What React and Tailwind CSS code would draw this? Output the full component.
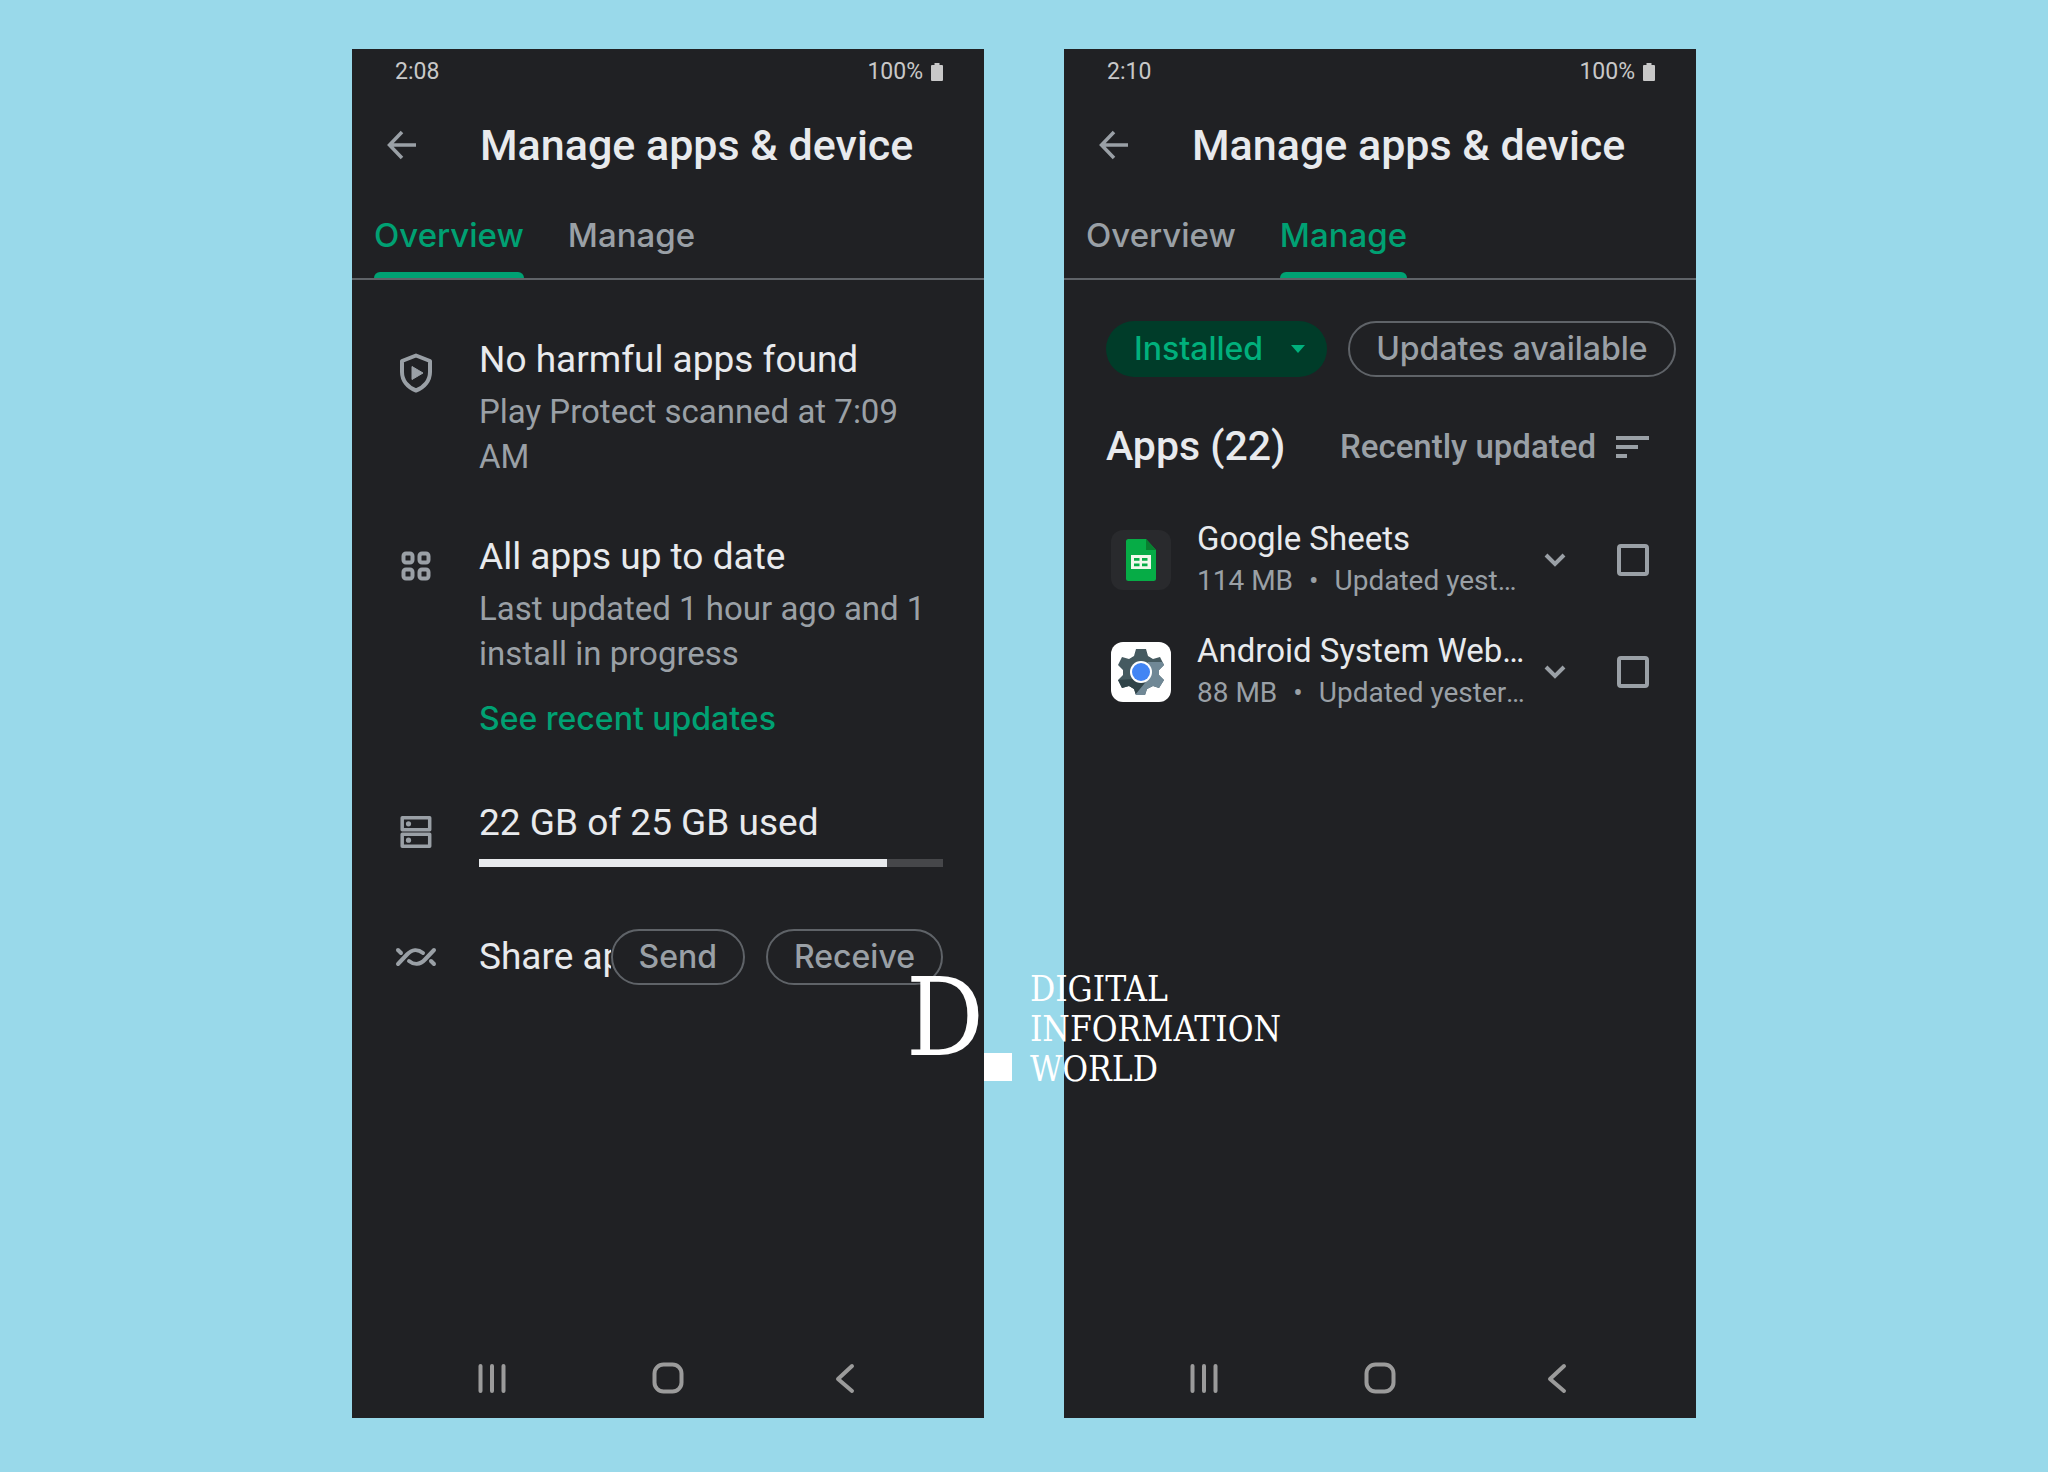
import { useState } from 'react';

const TABS = ['Overview', 'Manage'];

const APPS = [
  { id: 'sheets', name: 'Google Sheets', size: '114 MB', updated: 'Updated yesterday', Icon: SheetsIcon },
  { id: 'webview', name: 'Android System WebView', size: '88 MB', updated: 'Updated yesterday', Icon: WebViewIcon },
];

function ShieldIcon() {
  return (
    <svg className="h-10 w-8" viewBox="0 0 32 40" fill="none" aria-hidden="true">
      <path d="M16 2.500 30 8v11c0 8.500-5.600 15.500-14 18.500C7.600 34.500 2 27.500 2 19V8z" stroke="#9aa0a6" strokeWidth="4" strokeLinejoin="round" />
      <path d="M12 13.500v13l11-6.500z" fill="#9aa0a6" stroke="#9aa0a6" strokeLinejoin="round" />
    </svg>
  );
}

function GridIcon() {
  return (
    <svg className="size-8" viewBox="0 0 32 32" fill="none" stroke="#9aa0a6" strokeWidth="4" aria-hidden="true">
      <rect x="3.500" y="3.500" width="9" height="9" rx="2.500" />
      <rect x="19.500" y="3.500" width="9" height="9" rx="2.500" />
      <rect x="3.500" y="19.500" width="9" height="9" rx="2.500" />
      <rect x="19.500" y="19.500" width="9" height="9" rx="2.500" />
    </svg>
  );
}

function StorageIcon() {
  return (
    <svg className="size-8" viewBox="0 0 32 32" fill="none" stroke="#9aa0a6" strokeWidth="3.500" strokeLinejoin="round" aria-hidden="true">
      <rect x="2.200" y="1.800" width="27.500" height="12" />
      <rect x="2.200" y="18.200" width="27.500" height="12" />
      <circle cx="8.500" cy="7.800" r="2.600" fill="#9aa0a6" stroke="none" />
      <circle cx="8.500" cy="24.200" r="2.600" fill="#9aa0a6" stroke="none" />
    </svg>
  );
}

function NearbyIcon() {
  return (
    <svg className="h-5 w-[42px]" viewBox="0 0 42 20" fill="none" stroke="#9aa0a6" strokeWidth="4" strokeLinecap="round" aria-hidden="true">
      <path d="M3 17 12 7.500C17 2 23 2 28 6" />
      <path d="M39 3 30 12.500C25 18 19 18 14 14" />
      <path d="M3 3l3 3" />
      <path d="M36 14l3 3" />
    </svg>
  );
}

function SheetsIcon() {
  return (
    <span className="flex size-[60px] shrink-0 items-center justify-center rounded-xl bg-[#292a2d]">
      <svg className="h-[42px] w-[30px]" viewBox="0 0 30 42" aria-hidden="true">
        <path d="M2.500 0H20l10 11v28.500a2.500 2.500 0 0 1-2.500 2.500h-25A2.500 2.500 0 0 1 0 39.500v-37A2.500 2.500 0 0 1 2.500 0z" fill="#06ac46" />
        <path d="M20 0l10 11H20z" fill="#087f2f" />
        <path d="M5 16h20v14H5z" fill="#f1f8ec" />
        <path d="M8 19h5.500v2.800H8zM16 19h5.500v2.800H16zM8 24.500h5.500v2.800H8zM16 24.500h5.500v2.800H16z" fill="#06ac46" />
      </svg>
    </span>
  );
}

function WebViewIcon() {
  return (
    <span className="flex size-[60px] shrink-0 items-center justify-center rounded-xl bg-white">
      <svg className="size-[46px]" viewBox="0 0 46 46" aria-hidden="true">
        <defs>
          <clipPath id="gear">
            <path d="M18 0h10l2 7 5 3 7-2 4 8-5 5v5l5 5-5 8-6-2-6 3-2 6H18l-2-6-5-3-7 2-4-8 5-5v-5l-5-5 4-8 7 2 5-3z" />
          </clipPath>
        </defs>
        <g clipPath="url(#gear)">
          <path d="M0 0h46v46H0z" fill="#455a60" />
          <path d="M46 13H30l-8 18-6 15h30z" fill="#708896" />
          <path d="M31 29 17 46H0V31z" fill="#304348" />
        </g>
        <circle cx="23" cy="23" r="11" fill="#fff" />
        <circle cx="23" cy="23" r="9" fill="#4285f4" />
      </svg>
    </span>
  );
}

function StatusBar({ time }) {
  return (
    <div className="flex h-[46px] items-center justify-between pr-[41px] pl-[43px] text-[23px] text-[#c8c8c8]">
      <span>{time}</span>
      <span className="flex items-center gap-2">
        100%
        <svg className="h-[18px] w-3" viewBox="0 0 12 18" fill="#c8c8c8" aria-hidden="true">
          <path d="M3.500 0h5v2H11a1 1 0 0 1 1 1v14a1 1 0 0 1-1 1H1a1 1 0 0 1-1-1V3a1 1 0 0 1 1-1h2.500z" />
        </svg>
      </span>
    </div>
  );
}

function Header({ time, tab }) {
  return (
    <header>
      <StatusBar time={time} />
      <div className="flex h-[100px] items-center pl-8">
        <button aria-label="Back" className="flex w-24 items-center">
          <svg className="size-9" viewBox="0 0 36 36" fill="none" stroke="#9aa0a6" strokeWidth="3.500" aria-hidden="true">
            <path d="M32 18H6M18 5 5.500 18 18 31" />
          </svg>
        </button>
        <h1 className="text-[43px] font-medium text-[#e8eaed]">Manage apps &amp; device</h1>
      </div>
      <nav className="flex h-[85px] gap-11 border-b-2 border-[#5f6368] px-[22px]">
        {TABS.map((t) => (
          <button
            key={t}
            className={`flex flex-col justify-between pt-4 font-[Inter,sans-serif] text-[33px] font-medium ${
              t === tab ? 'text-[#00a173]' : 'text-[#9aa0a6]'
            }`}
          >
            {t}
            {t === tab && <span className="h-1.5 w-full rounded-t-md bg-[#00a173]" />}
          </button>
        ))}
      </nav>
    </header>
  );
}

function NavBar() {
  return (
    <footer className="flex h-20 items-center justify-around px-[52px]">
      <button aria-label="Recents">
        <svg className="size-8" viewBox="0 0 32 32" stroke="#9b9b9b" strokeWidth="4" strokeLinecap="round" aria-hidden="true">
          <path d="M4.500 4v25M16 4v25M27.500 4v25" />
        </svg>
      </button>
      <button aria-label="Home">
        <svg className="size-8" viewBox="0 0 32 32" fill="none" stroke="#9b9b9b" strokeWidth="4" aria-hidden="true">
          <rect x="2.500" y="2.500" width="27" height="27" rx="9" />
        </svg>
      </button>
      <button aria-label="Back">
        <svg className="size-8" viewBox="0 0 32 32" fill="none" stroke="#9b9b9b" strokeWidth="4" strokeLinecap="round" strokeLinejoin="round" aria-hidden="true">
          <path d="M24 4 10 17l14 12" />
        </svg>
      </button>
    </footer>
  );
}

function Phone({ time, tab, children }) {
  return (
    <section className="flex min-h-[1369px] w-[632px] flex-col bg-[#202124]">
      <Header time={time} tab={tab} />
      <div className="flex-1">{children}</div>
      <NavBar />
    </section>
  );
}

function OverviewRow({ icon, title, children }) {
  return (
    <div className="flex">
      <div className="flex w-[127px] shrink-0 justify-center pt-[17px]">{icon}</div>
      <div className="min-w-0 flex-1">
        <h2 className="text-[37px] leading-12 text-[#e8eaed]">{title}</h2>
        {children}
      </div>
    </div>
  );
}

function Pill({ children }) {
  return (
    <button className="h-14 shrink-0 rounded-full border-2 border-[#5f6368] bg-[#202124] px-[26px] font-[Inter,sans-serif] text-[32px] leading-10 font-medium text-[#9aa0a6]">
      {children}
    </button>
  );
}

function Overview() {
  return (
    <div className="flex flex-col gap-[54px] pt-14 pr-[41px]">
      <OverviewRow icon={<ShieldIcon />} title="No harmful apps found">
        <p className="mt-[5px] text-[33px] leading-[45px] text-[#9aa0a6]">Play Protect scanned at 7:09 AM</p>
      </OverviewRow>

      <OverviewRow icon={<GridIcon />} title="All apps up to date">
        <p className="mt-[5px] text-[33px] leading-[45px] text-[#9aa0a6]">
          Last updated 1 hour ago and 1 install in progress
        </p>
        <a href="#updates" className="mt-5 mb-1 block font-[Inter,sans-serif] text-[32px] leading-[45px] font-medium text-[#00a173]">
          See recent updates
        </a>
      </OverviewRow>

      <OverviewRow icon={<StorageIcon />} title="22 GB of 25 GB used">
        <div className="mt-3 h-2 bg-[#46474a]">
          <div className="h-full bg-[#e8eaed]" style={{ width: `${(22 / 25) * 100}%` }} />
        </div>
      </OverviewRow>

      <div className="mt-2 flex items-center">
        <div className="flex w-[127px] shrink-0 justify-center"><NearbyIcon /></div>
        <h2 className="min-w-0 flex-1 overflow-hidden text-[37px] leading-12 whitespace-nowrap text-[#e8eaed]">
          Share apps
        </h2>
        <div className="flex gap-[21px]">
          <Pill>Send</Pill>
          <Pill>Receive</Pill>
        </div>
      </div>
    </div>
  );
}

function AppRow({ app, checked, onToggle }) {
  const { Icon } = app;
  return (
    <li className="flex h-28 items-center">
      <Icon />
      <div className="ml-[26px] w-[332px]">
        <p className="truncate text-[33px] leading-[42px] text-[#e8eaed]">{app.name}</p>
        <p className="truncate text-[28px] leading-[42px] text-[#9aa0a6]">
          {app.size}
          <span className="mx-4">•</span>
          {app.updated}
        </p>
      </div>
      <button aria-label={`Details of ${app.name}`} className="ml-2.5">
        <svg className="size-8" viewBox="0 0 32 32" fill="none" stroke="#9aa0a6" strokeWidth="4" aria-hidden="true">
          <path d="m7 11 9 9 9-9" />
        </svg>
      </button>
      <input
        type="checkbox"
        aria-label={`Select ${app.name}`}
        checked={checked}
        onChange={onToggle}
        className="ml-[46px] size-8 shrink-0 appearance-none rounded-sm border-4 border-[#9aa0a6] checked:bg-[#00a173]"
      />
    </li>
  );
}

function Manage() {
  const [selected, setSelected] = useState([]);

  const toggle = (id) =>
    setSelected((prev) => (prev.includes(id) ? prev.filter((x) => x !== id) : [...prev, id]));

  return (
    <div className="pt-[41px] pl-[42px]">
      <div className="flex gap-[21px]">
        <button className="flex h-14 items-center gap-7 rounded-full bg-[#003c29] pr-[22px] pl-7 font-[Inter,sans-serif] text-[32px] font-medium text-[#00b07c]">
          Installed
          <svg className="h-2 w-[14px]" viewBox="0 0 14 8" fill="#00b07c" aria-hidden="true">
            <path d="M0 0h14L7 8z" />
          </svg>
        </button>
        <Pill>Updates available</Pill>
      </div>

      <div className="mt-[42px] flex h-14 items-center justify-between pr-[47px]">
        <h2 className="text-[41px] font-medium text-[#e8eaed]">Apps (22)</h2>
        <button className="flex items-center gap-5 text-[33px] font-medium text-[#9aa0a6]">
          Recently updated
          <svg className="h-[22px] w-[33px]" viewBox="0 0 33 22" fill="#9aa0a6" aria-hidden="true">
            <path d="M0 0h33v4H0zM0 9h22v4H0zM0 18h11v4H0z" />
          </svg>
        </button>
      </div>

      <ul className="mt-[29px] pl-[5px]">
        {APPS.map((app) => (
          <AppRow key={app.id} app={app} checked={selected.includes(app.id)} onToggle={() => toggle(app.id)} />
        ))}
      </ul>
    </div>
  );
}

function Watermark() {
  return (
    <div className="pointer-events-none absolute top-[910px] left-1/2 -ml-[118px] flex font-['DejaVu_Serif_Condensed','DejaVu_Serif',serif] text-white">
      <span className="text-[108px] leading-[118px]">D</span>
      <span className="mt-[94px] size-7 bg-white" />
      <span className="ml-[18px] pt-2.5 text-[35px] leading-10">
        DIGITAL
        <br />
        INFORMATION
        <br />
        WORLD
      </span>
    </div>
  );
}

export default function App() {
  return (
    <main className="min-h-screen bg-[#99d9ea] py-[49px] font-[Roboto,sans-serif]">
      <div className="relative flex justify-center gap-20">
        <Phone time="2:08" tab="Overview">
          <Overview />
        </Phone>
        <Phone time="2:10" tab="Manage">
          <Manage />
        </Phone>
        <Watermark />
      </div>
    </main>
  );
}
